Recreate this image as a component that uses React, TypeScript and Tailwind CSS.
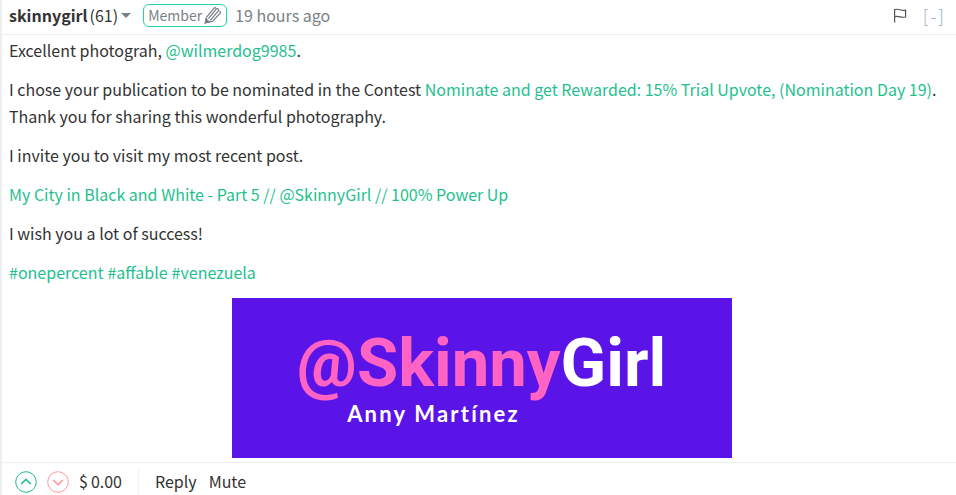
import type { ReactNode } from 'react'

const TAGS = ['onepercent', 'affable', 'venezuela']

function Link({ children }: { children: ReactNode }) {
  return (
    <a href="#" className="text-[#1fbf8f] hover:underline">
      {children}
    </a>
  )
}

function PencilIcon() {
  return (
    <svg viewBox="0 0 18 18" className="h-[18px] w-[18px]" fill="none" stroke="#788187" strokeWidth="1.3" aria-hidden="true">
      <path d="M2.4 11.4 10 2.2Q11 1.2 12 2.2" />
      <path d="M4.4 12.6 12 3.4Q13.4 2 14.4 3.2Q15 4.2 14 5.4L6.2 14.4" />
      <path d="M15.4 5.2Q17 6 16 7.4L8.4 15.4L1.6 16.8L2.4 11.4" />
      <path d="M1.2 17 2.2 13 5 15.8Z" fill="#788187" />
    </svg>
  )
}

function VoteButton({ down = false }: { down?: boolean }) {
  return (
    <button type="button" aria-label={down ? 'Downvote' : 'Upvote'} className={down ? 'text-[#ff9b9b]' : 'text-[#1fbf8f]'}>
      <svg viewBox="0 0 22 22" className="h-[22px] w-[22px]" fill="none" stroke="currentColor">
        <circle cx="11" cy="11" r="10.3" strokeWidth="1" />
        <path d={down ? 'M6.2 9 11 13.6 15.8 9' : 'M6.2 13 11 8.4 15.8 13'} strokeWidth="1.6" />
      </svg>
    </button>
  )
}

function Header() {
  return (
    <header className="flex h-[35px] items-center border-b border-[#eeeeee] pr-3 pb-1 pl-[7px]">
      <button type="button" className="flex items-center gap-[3px]">
        <span className="flex gap-[2px]">
          <strong className="font-bold">skinnygirl</strong> (61)
        </span>
        <svg viewBox="0 0 10 5" className="h-[5px] w-[10px]" fill="#788187" aria-hidden="true">
          <path d="M0 0h10L5 5z" />
        </svg>
      </button>
      <span className="ml-3 flex h-[23px] items-center gap-[2px] rounded-md border border-[#1ed6a5] px-1 text-sm text-[#788187]">
        Member
        <PencilIcon />
      </span>
      <a href="#" className="ml-2 text-[#788187]">19 hours ago</a>
      <button type="button" aria-label="Flag" className="ml-auto">
        <svg viewBox="0 0 14 16" className="h-4 w-[14px]" fill="none" stroke="#555" strokeWidth="1.2" aria-hidden="true">
          <path d="M1.6 15.5V2.6Q4 1.8 7 2.8T12.6 3.2V10Q10 10.6 7 9.8T1.6 9.6" />
        </svg>
      </button>
      <button type="button" aria-label="Collapse" className="ml-4 flex gap-[2px] text-lg font-light text-[#9fb0bf]">
        <span>[</span>
        <span>-</span>
        <span>]</span>
      </button>
    </header>
  )
}

function Banner() {
  return (
    <div className="mx-auto flex h-40 w-full max-w-[500px] flex-col items-center bg-[#5b14e8] pt-8 text-white">
      <p className="font-[Roboto,sans-serif] text-[67px] leading-[66px] font-bold whitespace-nowrap">
        <span className="text-[#ff63c3]">@Skinny</span>Girl
      </p>
      <p className="mr-24 font-[Lato,sans-serif] text-[22px] leading-9 font-bold tracking-widest">Anny Martínez</p>
    </div>
  )
}

export default function App() {
  return (
    <article className="border-l-2 border-[#eeeeee] bg-white font-['Noto_Sans_CJK_SC',sans-serif] text-base leading-[27px] text-[#333333]">
      <Header />
      <div className="flex flex-col gap-3 pt-[2px] pr-[2px] pb-1 pl-[7px]">
        <p>
          Excellent photograh, <Link>@wilmerdog9985</Link>.
        </p>
        <p>
          I chose your publication to be nominated in the Contest{' '}
          <Link>Nominate and get Rewarded: 15% Trial Upvote, (Nomination Day 19)</Link>.
          <br />
          Thank you for sharing this wonderful photography.
        </p>
        <p>I invite you to visit my most recent post.</p>
        <p>
          <Link>My City in Black and White - Part 5 // @SkinnyGirl // 100% Power Up</Link>
        </p>
        <p>I wish you a lot of success!</p>
        <p className="flex gap-1">
          {TAGS.map(tag => (
            <Link key={tag}>#{tag}</Link>
          ))}
        </p>
        <Banner />
      </div>
      <footer className="flex items-center border-t border-[#eeeeee] pt-[5px] pl-[13px]">
        <div className="flex items-center gap-[10px]">
          <VoteButton />
          <VoteButton down />
          <span className="flex gap-[3px]">
            <span>$</span>
            <span>0.00</span>
          </span>
        </div>
        <div className="ml-4 flex gap-3 border-l border-[#f2f2f2] pl-4">
          <button type="button">Reply</button>
          <button type="button">Mute</button>
        </div>
      </footer>
    </article>
  )
}
